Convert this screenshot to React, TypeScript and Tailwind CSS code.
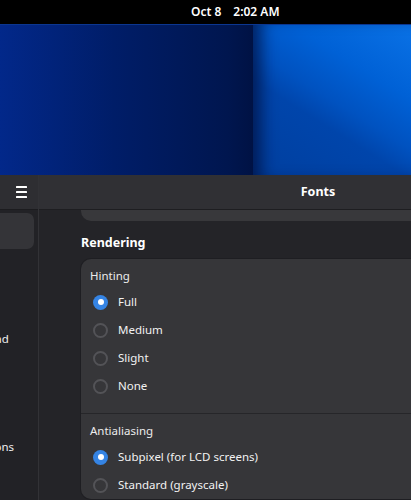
const hinting = ["Full", "Medium", "Slight", "None"];
const antialiasing = ["Subpixel (for LCD screens)", "Standard (grayscale)"];
const pages = ["Fonts", "Appearance", "Sound", "Mouse & Touchpad", "Keyboard", "Windows", "Startup Applications"];

function Radio({ checked }: { checked: boolean }) {
  if (checked) {
    return (
      <div className="w-[15px] h-[15px] rounded-full bg-[#3584e4] flex items-center justify-center shrink-0">
        <div className="w-[6px] h-[6px] rounded-full bg-white" />
      </div>
    );
  }
  return <div className="w-[15px] h-[15px] rounded-full border-2 border-[#535357] shrink-0" />;
}

function Group({ title, items, selected }: { title: string; items: string[]; selected: number }) {
  return (
    <div className="pt-[9px]">
      <div className="pl-[9px] h-[16px] leading-[16px] text-[11.5px] text-[#ececec]">{title}</div>
      <div className="pt-[4px]">
        {items.map((item, i) => (
          <div key={item} className="h-[28px] flex items-center pl-[12px] gap-[10px]">
            <Radio checked={i === selected} />
            <span className="text-[11.5px] text-[#f2f2f2] whitespace-nowrap">{item}</span>
          </div>
        ))}
      </div>
    </div>
  );
}

export default function App() {
  return (
    <div
      className="w-[411px] h-[500px] overflow-hidden bg-black flex flex-col"
      style={{ fontFamily: '"Noto Sans", "Open Sans", sans-serif' }}
    >
      {/* top bar */}
      <div className="h-[24px] shrink-0 bg-black flex items-center pl-[191px] gap-[12px] text-[12px] font-semibold text-white">
        <span>Oct 8</span>
        <span>2:02 AM</span>
      </div>

      {/* wallpaper */}
      <div className="h-[151px] shrink-0 flex border-t border-[#0b3690]">
        <div className="w-[253px] bg-[linear-gradient(to_right,#02288a_0%,#001d68_45%,#00164f_90%,#001244_100%)]" />
        <div className="flex-1 bg-[linear-gradient(212deg,#0a72e6_0%,#0061d6_30%,#0052c0_50%,#0045ab_62%,#003f9f_100%)] shadow-[inset_16px_0_16px_-8px_rgba(0,15,60,0.75)]" />
      </div>

      {/* window */}
      <div className="flex-1 flex min-h-0">
        {/* sidebar */}
        <div className="w-[39px] shrink-0 flex flex-col border-r border-[#323236] bg-[#222226]">
          <div className="h-[35px] shrink-0 bg-[#2e2e32] flex items-center justify-end pr-[11px] border-b border-[#1c1c1f]">
            <svg width="11" height="12" viewBox="0 0 11 12" className="text-white">
              <rect x="0" y="0" width="11" height="2" rx="0.5" fill="currentColor" />
              <rect x="0" y="5" width="11" height="2" rx="0.5" fill="currentColor" />
              <rect x="0" y="10" width="11" height="2" rx="0.5" fill="currentColor" />
            </svg>
          </div>
          <div className="pt-[3px] pr-[4px] flex flex-col overflow-hidden">
            {pages.map((p, i) => (
              <div
                key={p}
                className={
                  "h-[36px] shrink-0 flex items-center overflow-hidden rounded-r-[7px] " +
                  (i === 0 ? "bg-[#343438]" : "")
                }
              >
                <span className="ml-[-95px] whitespace-nowrap text-[11.5px] text-[#f0f0f0]">{p}</span>
              </div>
            ))}
          </div>
        </div>

        {/* main */}
        <div className="flex-1 min-w-0 flex flex-col overflow-hidden bg-[#242428]">
          <div className="h-[35px] shrink-0 bg-[#303034] border-b border-[#1e1e21]">
            <div className="w-[558px] h-full flex items-center justify-center text-[12.5px] font-bold text-white">
              Fonts
            </div>
          </div>
          <div className="pl-[42px] w-[560px]">
            <div className="h-[11px] bg-[#38383b] rounded-b-[10px]" />
            <div className="h-[38px] pt-[6px] flex items-center text-[12.5px] font-bold text-white">Rendering</div>
            <div className="rounded-[10px] bg-[#363639] shadow-[0_0_0_1px_rgba(0,0,0,0.15)]">
              <div className="pb-[13px]">
                <Group title="Hinting" items={hinting} selected={0} />
              </div>
              <div className="h-px bg-[#262629]" />
              <Group title="Antialiasing" items={antialiasing} selected={0} />
            </div>
          </div>
        </div>
      </div>
    </div>
  );
}
